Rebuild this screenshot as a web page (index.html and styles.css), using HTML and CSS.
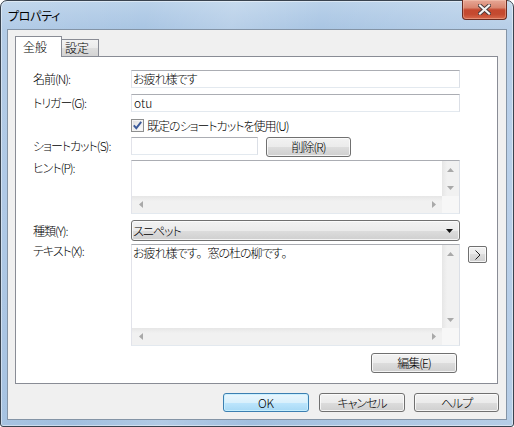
FILE: index.html
```html
<!DOCTYPE html>
<html lang="ja">
<head>
<meta charset="utf-8">
<title>プロパティ</title>
<link rel="stylesheet" href="styles.css">
</head>
<body>
<div class="window">
  <div class="titlebar">
    <span class="title">プロパティ</span>
    <div class="close">
      <svg width="13" height="11" viewBox="0 0 13 11">
        <path d="M2 1.5 L11 9.5 M11 1.5 L2 9.5" stroke="#4a3a3a" stroke-width="4" stroke-linecap="square" fill="none"/>
        <path d="M2 1.5 L11 9.5 M11 1.5 L2 9.5" stroke="#f4f4f4" stroke-width="2.2" stroke-linecap="square" fill="none"/>
      </svg>
    </div>
  </div>
  <div class="client">
    <div class="tabs">
      <div class="tab tab-active">全般</div>
      <div class="tab tab-idle">設定</div>
    </div>
    <div class="panel">
      <div class="row row-name">
        <span class="label">名前(N):</span>
        <div class="input wide">お疲れ様です</div>
      </div>
      <div class="row row-trigger">
        <span class="label">トリガー(G):</span>
        <div class="input wide latin">otu</div>
      </div>
      <div class="row row-check">
        <span class="checkbox">
          <svg width="11" height="11" viewBox="0 0 11 11">
            <path d="M1.8 5.4 L4.3 8.2 L9.2 1.8" stroke="#3b5a9a" stroke-width="1.9" fill="none"/>
          </svg>
        </span>
        <span class="check-label">既定のショートカットを使用(U)</span>
      </div>
      <div class="row row-shortcut">
        <span class="label label-tall">ショートカット(S):</span>
        <div class="input narrow"></div>
        <div class="button btn-delete">削除(R)</div>
      </div>
      <div class="row row-hint">
        <span class="label label-top">ヒント(P):</span>
        <div class="scrollbox box-hint">
          <div class="box-content"></div>
          <div class="vbar">
            <span class="arrow-btn"><svg width="7" height="4" viewBox="0 0 7 4"><path d="M0 4H7L3.5 0Z" class="arr"/></svg></span>
            <span class="arrow-btn"><svg width="7" height="4" viewBox="0 0 7 4"><path d="M0 0H7L3.5 4Z" class="arr"/></svg></span>
          </div>
          <div class="hbar">
            <span class="arrow-btn"><svg width="4" height="7" viewBox="0 0 4 7"><path d="M4 0V7L0 3.5Z" class="arr"/></svg></span>
            <span class="arrow-btn"><svg width="4" height="7" viewBox="0 0 4 7"><path d="M0 0V7L4 3.5Z" class="arr"/></svg></span>
          </div>
          <div class="corner"></div>
        </div>
      </div>
      <div class="row row-kind">
        <span class="label">種類(Y):</span>
        <div class="combo">
          <span class="combo-text">スニペット</span>
          <svg width="7" height="4" viewBox="0 0 7 4"><path d="M0 0H7L3.5 4Z" fill="#111"/></svg>
        </div>
      </div>
      <div class="row row-text">
        <span class="label label-top2">テキスト(X):</span>
        <div class="scrollbox box-text">
          <div class="box-content text-content">お疲れ様です<span class="punct">。</span>窓の杜の柳です<span class="punct">。</span></div>
          <div class="vbar">
            <span class="arrow-btn"><svg width="7" height="4" viewBox="0 0 7 4"><path d="M0 4H7L3.5 0Z" class="arr"/></svg></span>
            <span class="arrow-btn"><svg width="7" height="4" viewBox="0 0 7 4"><path d="M0 0H7L3.5 4Z" class="arr"/></svg></span>
          </div>
          <div class="hbar">
            <span class="arrow-btn"><svg width="4" height="7" viewBox="0 0 4 7"><path d="M4 0V7L0 3.5Z" class="arr"/></svg></span>
            <span class="arrow-btn"><svg width="4" height="7" viewBox="0 0 4 7"><path d="M0 0V7L4 3.5Z" class="arr"/></svg></span>
          </div>
          <div class="corner"></div>
        </div>
        <div class="button btn-more">
          <svg width="6" height="10" viewBox="0 0 6 10"><path d="M0.5 0.5 L5 5 L0.5 9.5" stroke="#222" stroke-width="1" fill="none"/></svg>
        </div>
      </div>
      <div class="row row-edit">
        <div class="button btn-edit">編集(E)</div>
      </div>
    </div>
    <div class="footer">
      <div class="button btn-foot btn-default">OK</div>
      <div class="button btn-foot btn-cancel">キャンセル</div>
      <div class="button btn-foot btn-help">ヘルプ</div>
    </div>
  </div>
</div>
</body>
</html>
```

FILE: styles.css
```css
html, body {
  margin: 0;
  padding: 0;
}
body {
  width: 514px;
  height: 427px;
  overflow: hidden;
  background: #ffffff;
  font-family: "Noto Sans CJK JP", "Noto Sans", sans-serif;
  font-size: 12px;
  font-weight: 300;
  font-feature-settings: "palt";
  letter-spacing: -1px;
  color: #000;
}
.window {
  box-sizing: border-box;
  width: 514px;
  height: 427px;
  border: 1px solid #39434f;
  border-radius: 7px 7px 3px 3px;
  padding: 0 6px 6px 6px;
  display: flex;
  flex-direction: column;
  background:
    linear-gradient(100deg, rgba(255,255,255,0.12) 0%, rgba(255,255,255,0) 25%, rgba(255,255,255,0.18) 40%, rgba(255,255,255,0) 55%, rgba(255,255,255,0.12) 75%, rgba(255,255,255,0.22) 100%),
    linear-gradient(180deg, #bad2ea 0px, #a9c5e3 28px, #a8c4e4 200px, #a1bfdf 427px);
  box-shadow: inset 0 0 0 1px rgba(255,255,255,0.45);
}
.titlebar {
  height: 28px;
  flex: none;
  display: flex;
  align-items: flex-start;
}
.title {
  flex: 1;
  margin-left: 1px;
  padding-top: 7px;
  line-height: 16px;
  font-size: 12px;
  font-weight: 400;
  letter-spacing: -0.3px;
  color: #000;
}
.close {
  margin-top: -1px;
  width: 45px;
  height: 20px;
  box-sizing: border-box;
  border: 1px solid #6a2c22;
  border-top: none;
  border-radius: 0 0 4px 4px;
  background: linear-gradient(180deg, #e7a796 0%, #d98670 40%, #c5482f 52%, #c44a30 75%, #d8694c 100%);
  box-shadow: inset 0 0 0 1px rgba(255,220,200,0.35);
  display: flex;
  align-items: center;
  justify-content: center;
}
.client {
  box-sizing: border-box;
  width: 500px;
  height: 391px;
  border: 1px solid #8494a6;
  background: #f0f0f0;
  padding: 6px 8px 7px 7px;
  display: flex;
  flex-direction: column;
}
.tabs {
  height: 20px;
  display: flex;
  align-items: flex-end;
  flex: none;
}
.tab {
  box-sizing: border-box;
  border: 1px solid #898c95;
  border-bottom: none;
}
.tab-active {
  width: 47px;
  height: 21px;
  margin-bottom: -1px;
  background: #fff;
  position: relative;
  z-index: 1;
  line-height: 19px;
  padding-left: 7px;
  letter-spacing: 0;
}
.tab-idle {
  width: 37px;
  height: 17px;
  border-left: none;
  background: linear-gradient(180deg, #f3f3f3 0%, #ebebeb 50%, #dedede 50%, #d4d4d4 100%);
  line-height: 16px;
  padding-left: 3px;
  letter-spacing: 0;
}
.panel {
  box-sizing: border-box;
  height: 328px;
  flex: none;
  border: 1px solid #898c95;
  background: #fff;
  padding-left: 17px;
  display: flex;
  flex-direction: column;
}
.row {
  display: flex;
  align-items: center;
}
.label {
  width: 98px;
  flex: none;
  line-height: 14px;
}
.label-tall {
  line-height: 18px;
}
.label-top {
  align-self: flex-start;
  padding-top: 1px;
}
.label-top2 {
  align-self: flex-start;
}
.row-name { margin-top: 13px; }
.row-trigger { margin-top: 6px; }
.row-check { margin-top: 7px; padding-left: 98px; height: 13px; }
.row-shortcut { margin-top: 5px; align-items: flex-start; height: 20px; }
.row-hint { margin-top: 3px; align-items: flex-start; }
.row-kind { margin-top: 6px; }
.row-text { margin-top: 3px; align-items: flex-start; }
.row-edit { margin-top: 7px; justify-content: flex-end; padding-right: 40px; }

.input {
  box-sizing: border-box;
  height: 18px;
  border: 1px solid;
  border-color: #abadb3 #dbdfe6 #e3e9ef #e2e3ea;
  background: #fff;
  padding-left: 1px;
  line-height: 16px;
  white-space: nowrap;
}
.wide { width: 329px; }
.narrow { width: 127px; }
.latin { padding-left: 2px; letter-spacing: 0; }

.checkbox {
  box-sizing: border-box;
  width: 13px;
  height: 13px;
  border: 1px solid #8e8f8f;
  background: linear-gradient(135deg, #dcdcdc 0%, #f2f2f2 60%, #ffffff 100%);
  box-shadow: inset 0 0 0 1px #f4f4f4;
  display: flex;
  align-items: center;
  justify-content: center;
  flex: none;
}
.check-label {
  margin-left: 3px;
  line-height: 14px;
}

.button {
  box-sizing: border-box;
  border: 1px solid #707070;
  border-radius: 3px;
  background: linear-gradient(180deg, #f2f2f2 0%, #ebebeb 50%, #dddddd 50%, #cfcfcf 100%);
  box-shadow: inset 0 0 0 1px rgba(252,252,252,0.8);
  display: flex;
  align-items: center;
  justify-content: center;
  line-height: 16px;
  flex: none;
}
.btn-delete {
  width: 85px;
  height: 20px;
  margin-left: 8px;
}
.btn-more {
  width: 19px;
  height: 17px;
  margin-left: 8px;
  margin-top: 2px;
  border-radius: 2px;
}
.btn-edit {
  width: 86px;
  height: 20px;
}
.btn-foot {
  height: 19px;
}
.btn-default {
  width: 86px;
  border-color: #3c7fb1;
  background: linear-gradient(180deg, #eaf6fd 0%, #d9f0fc 50%, #bee6fd 50%, #a7d9f5 100%);
  box-shadow: inset 0 0 0 1px rgba(200,240,255,0.9);
  letter-spacing: 0;
}
.btn-cancel {
  width: 86px;
  margin-left: 10px;
}
.btn-help {
  width: 85px;
  margin-left: 9px;
}
.footer {
  margin-top: 9px;
  margin-right: -1px;
  display: flex;
  justify-content: flex-end;
  flex: none;
}

.scrollbox {
  box-sizing: border-box;
  width: 329px;
  border: 1px solid;
  border-color: #abadb3 #dbdfe6 #e3e9ef #e2e3ea;
  background: #fff;
  display: grid;
  grid-template-columns: 1fr 17px;
  grid-template-rows: 1fr 17px;
  flex: none;
}
.box-hint { height: 54px; }
.box-text { height: 102px; }
.box-content {
  line-height: 16px;
  padding-left: 1px;
  white-space: nowrap;
  overflow: hidden;
}
.punct {
  font-feature-settings: normal;
}
.vbar {
  background: linear-gradient(90deg, #e6e6e6 0%, #f1f1f1 30%, #f1f1f1 100%);
  display: flex;
  flex-direction: column;
  justify-content: space-between;
}
.hbar {
  background: linear-gradient(180deg, #e6e6e6 0%, #f1f1f1 30%, #f1f1f1 100%);
  display: flex;
  justify-content: space-between;
}
.corner {
  background: #f7f7f7;
}
.arrow-btn {
  width: 17px;
  height: 17px;
  display: flex;
  align-items: center;
  justify-content: center;
}
.arr {
  fill: #a9a9a9;
}

.combo {
  box-sizing: border-box;
  width: 329px;
  height: 21px;
  border: 1px solid #707070;
  border-radius: 3px;
  background: linear-gradient(180deg, #f2f2f2 0%, #ebebeb 50%, #dddddd 50%, #cfcfcf 100%);
  box-shadow: inset 0 0 0 1px rgba(252,252,252,0.8);
  display: flex;
  align-items: center;
  padding: 0 6px 0 1px;
}
.combo-text {
  flex: 1;
  line-height: 16px;
}
```
